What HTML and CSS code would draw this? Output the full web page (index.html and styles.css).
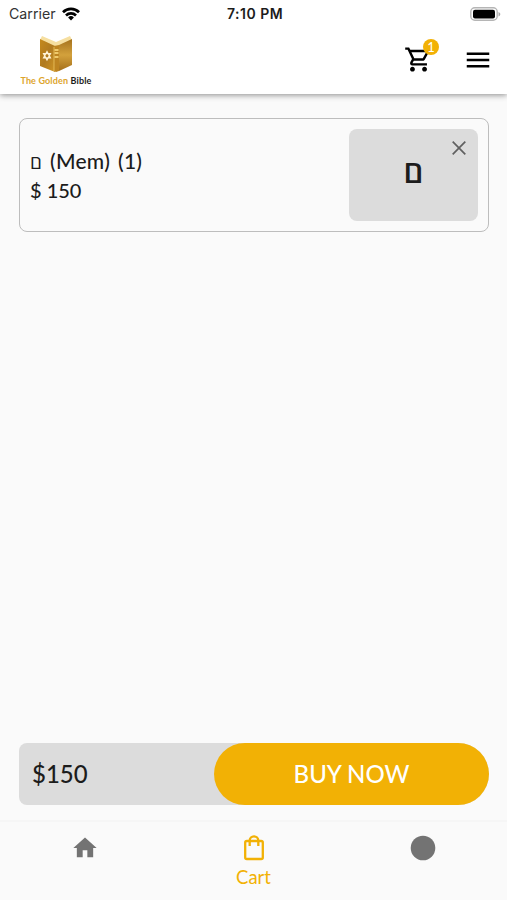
FILE: index.html
```html
<!DOCTYPE html>
<html lang="en">
<head>
    <meta charset="UTF-8">
    <meta name="viewport" content="width=device-width, initial-scale=1.0">
    <title>The Golden Bible - Cart</title>
    <link rel="stylesheet" href="styles.css">
</head>
<body>
    <header class="header">
        <div class="status-bar">
            <div class="carrier">
                <span class="carrier-name">Carrier</span>
                <svg width="18" height="14" viewBox="0 0 18 14">
                    <g fill="none" stroke="#000" stroke-width="2.7">
                        <path d="M1 5.2a11.4 11.4 0 0 1 16 0"/>
                        <path d="M4 8.5a7.1 7.1 0 0 1 10 0"/>
                    </g>
                    <path d="M6.1 10.4a4.2 4.2 0 0 1 5.8 0L9 13.4z"/>
                </svg>
            </div>
            <span class="time">7:10 PM</span>
            <svg class="battery" width="31" height="14" viewBox="0 0 31 14">
                <rect x=".8" y=".8" width="26.4" height="12.4" rx="4" fill="#fff" stroke="#b5b5b5" stroke-width="1.4"/>
                <rect x="3" y="2.7" width="22" height="8.8" rx="2"/>
                <path d="M28.5 5c2.4.8 2.4 3.6 0 4.4z" fill="#aaa"/>
            </svg>
        </div>
        <div class="toolbar">
            <div class="logo">
                <svg width="34" height="38" viewBox="0 0 34 38">
                    <defs>
                        <linearGradient id="cover" x1="0" y1="0" x2="1" y2="1">
                            <stop offset="0" stop-color="#c58a1c"/>
                            <stop offset=".5" stop-color="#b07a20"/>
                            <stop offset="1" stop-color="#cf9626"/>
                        </linearGradient>
                        <linearGradient id="back" x1="0" y1="0" x2="0" y2="1">
                            <stop offset="0" stop-color="#a5721d"/>
                            <stop offset=".5" stop-color="#d3a13c"/>
                            <stop offset="1" stop-color="#a56f19"/>
                        </linearGradient>
                    </defs>
                    <path d="M1 5L3 1l14 6 14-6 2 4-16 8z" fill="#f6dfa0"/>
                    <path d="M1 4l15 7v26L1 31z" fill="url(#cover)"/>
                    <path d="M33 4l-13 6v26l13-6z" fill="url(#back)"/>
                    <path d="M15 11l5-1v26l-3 1-2-1z" fill="#bd8421"/>
                    <path d="M15.5 15h4M15.5 18h4M15.5 22h4" stroke="#ffe184" stroke-width="1.3"/>
                    <path d="M15 12v24" stroke="#f0cc6c" stroke-width=".7"/>
                    <path d="M8 16.5l3.4 6.3H4.6zM8 25l-3.4-6.3h6.8z" fill="none" stroke="#fff3d5" stroke-width="1.3"/>
                </svg>
                <div class="logo-text"><span>The Golden</span> Bible</div>
            </div>
            <div class="actions">
                <div class="cart-icon">
                    <svg width="29" height="29" viewBox="0 0 24 24">
                        <path d="M15.55 13c.75 0 1.41-.41 1.75-1.03l3.58-6.49A.996.996 0 0 0 20.01 4H5.21l-.94-2H1v2h2l3.6 7.59-1.35 2.44C4.52 15.37 5.48 17 7 17h12v-2H7l1.1-2h7.45zM6.16 6h12.15l-2.76 5H8.53L6.16 6zM7 18c-1.1 0-1.99.9-1.99 2S5.9 22 7 22s2-.9 2-2-.9-2-2-2zm10 0c-1.1 0-1.99.9-1.99 2s.89 2 1.99 2 2-.9 2-2-.9-2-2-2z"/>
                    </svg>
                    <span class="badge">1</span>
                </div>
                <svg width="30" height="30" viewBox="0 0 24 24">
                    <path d="M3 18h18v-2H3v2zm0-5h18v-2H3v2zm0-7v2h18V6H3z"/>
                </svg>
            </div>
        </div>
    </header>

    <main class="content">
        <div class="cart-item">
            <div class="item-info">
                <div class="item-name"><bdi class="letter">ם</bdi> (Mem) (1)</div>
                <div class="item-price">$ 150</div>
            </div>
            <div class="item-thumb">
                <span>ם</span>
                <svg class="remove" width="14" height="14" viewBox="0 0 14 14">
                    <path d="M.7.7l12.6 12.6M13.3.7L.7 13.3" stroke="#606060" stroke-width="1.7"/>
                </svg>
            </div>
        </div>
        <div class="checkout">
            <span class="total">$150</span>
            <button class="buy"><span>BUY NOW</span></button>
        </div>
    </main>

    <nav class="tabs">
        <div class="tab">
            <svg width="28" height="28" viewBox="0 0 24 24" fill="#737373">
                <path d="M10 20v-6h4v6h5v-8h3L12 3 2 12h3v8z"/>
            </svg>
        </div>
        <div class="tab active">
            <svg width="28" height="28" viewBox="0 0 28 28" fill="none" stroke="#f2b105" stroke-width="2.3">
                <rect x="5.2" y="7" width="17.6" height="18" rx="1.6"/>
                <path d="M9.7 12V6.6a4.3 4.3 0 0 1 8.6 0V12"/>
            </svg>
            <span class="tab-label">Cart</span>
        </div>
        <div class="tab">
            <svg width="28" height="28" viewBox="0 0 28 28" fill="#737373">
                <circle cx="14" cy="14" r="12.3"/>
            </svg>
        </div>
    </nav>
</body>
</html>
```

FILE: styles.css
```css
* {
    box-sizing: border-box;
}
body {
    margin: 0;
    height: 900px;
    display: flex;
    flex-direction: column;
    background-color: #fafafa;
    color: #1c1c1c;
    font-family: Lato, "Open Sans", sans-serif;
    overflow: hidden;
}
svg {
    display: block;
    flex: none;
}
.header {
    height: 94px;
    background-color: #fff;
    box-shadow: 0 1px 6px rgba(0, 0, 0, 0.45);
}
.status-bar {
    height: 27px;
    display: grid;
    grid-template-columns: 1fr auto 1fr;
    align-items: center;
    padding: 0 6px 0 9px;
    font-family: Inter, sans-serif;
    font-size: 14px;
}
.carrier {
    display: flex;
    align-items: center;
    gap: 6px;
}
.carrier-name {
    color: #333;
    font-size: 14.2px;
}
.time {
    font-weight: 600;
    letter-spacing: 0.5px;
}
.battery {
    justify-self: end;
}
.toolbar {
    height: 67px;
    display: flex;
    justify-content: space-between;
    padding: 0 14px 0 20px;
}
.logo {
    display: flex;
    flex-direction: column;
    align-items: center;
    width: 72px;
    padding-top: 8px;
}
.logo-text {
    margin-top: 2px;
    font-size: 9px;
    line-height: 12px;
    font-weight: 700;
    letter-spacing: 0.15px;
    white-space: nowrap;
}
.logo-text span {
    color: #dda52c;
}
.actions {
    display: flex;
    align-items: center;
    gap: 30px;
    padding-bottom: 2px;
}
.cart-icon {
    position: relative;
}
.badge {
    position: absolute;
    top: -6px;
    right: -6px;
    width: 16px;
    height: 16px;
    border-radius: 50%;
    background-color: #f2b105;
    color: #fff;
    font-size: 13px;
    line-height: 16px;
    text-align: center;
}
.content {
    flex: 1;
    display: flex;
    flex-direction: column;
    justify-content: space-between;
    padding: 24px 18px 15px 19px;
}
.cart-item {
    height: 114px;
    display: flex;
    align-items: center;
    justify-content: space-between;
    padding: 0 10px;
    border: 1px solid #bdbdbd;
    border-radius: 8px;
}
.item-info {
    font-weight: 500;
    font-size: 21px;
}
.item-name {
    height: 30px;
    line-height: 32px;
    letter-spacing: 0.2px;
    word-spacing: 2.5px;
}
.letter {
    font-family: "Open Sans", sans-serif;
    font-size: 19px;
}
.item-price {
    height: 30px;
    line-height: 31px;
    font-size: 20px;
}
.item-thumb {
    position: relative;
    width: 129px;
    height: 92px;
    display: flex;
    align-items: center;
    justify-content: center;
    padding-bottom: 9px;
    border-radius: 8px;
    background-color: #dcdcdc;
    font-family: "Open Sans", sans-serif;
    font-size: 31px;
    font-weight: 600;
}
.remove {
    position: absolute;
    top: 12px;
    right: 12px;
}
.checkout {
    height: 62px;
    display: flex;
    align-items: center;
    justify-content: space-between;
    padding-left: 13px;
    border-radius: 8px 31px 31px 8px;
    background-color: #dcdcdc;
}
.total {
    padding-bottom: 2px;
    font-size: 24px;
    font-weight: 500;
}
.buy {
    width: 275px;
    height: 62px;
    padding: 0 0 2px;
    border: none;
    border-radius: 31px;
    background-color: #f2b105;
    color: #fff;
    font-family: inherit;
    font-size: 24px;
    font-weight: 500;
}
.tabs {
    height: 80px;
    display: flex;
    border-top: 2px solid #f6f6f6;
}
.tab {
    flex: 1;
    display: flex;
    flex-direction: column;
    align-items: center;
    padding-top: 11.5px;
}
.tab-label {
    color: #f2b105;
    font-size: 18.5px;
    line-height: 30px;
}
```
